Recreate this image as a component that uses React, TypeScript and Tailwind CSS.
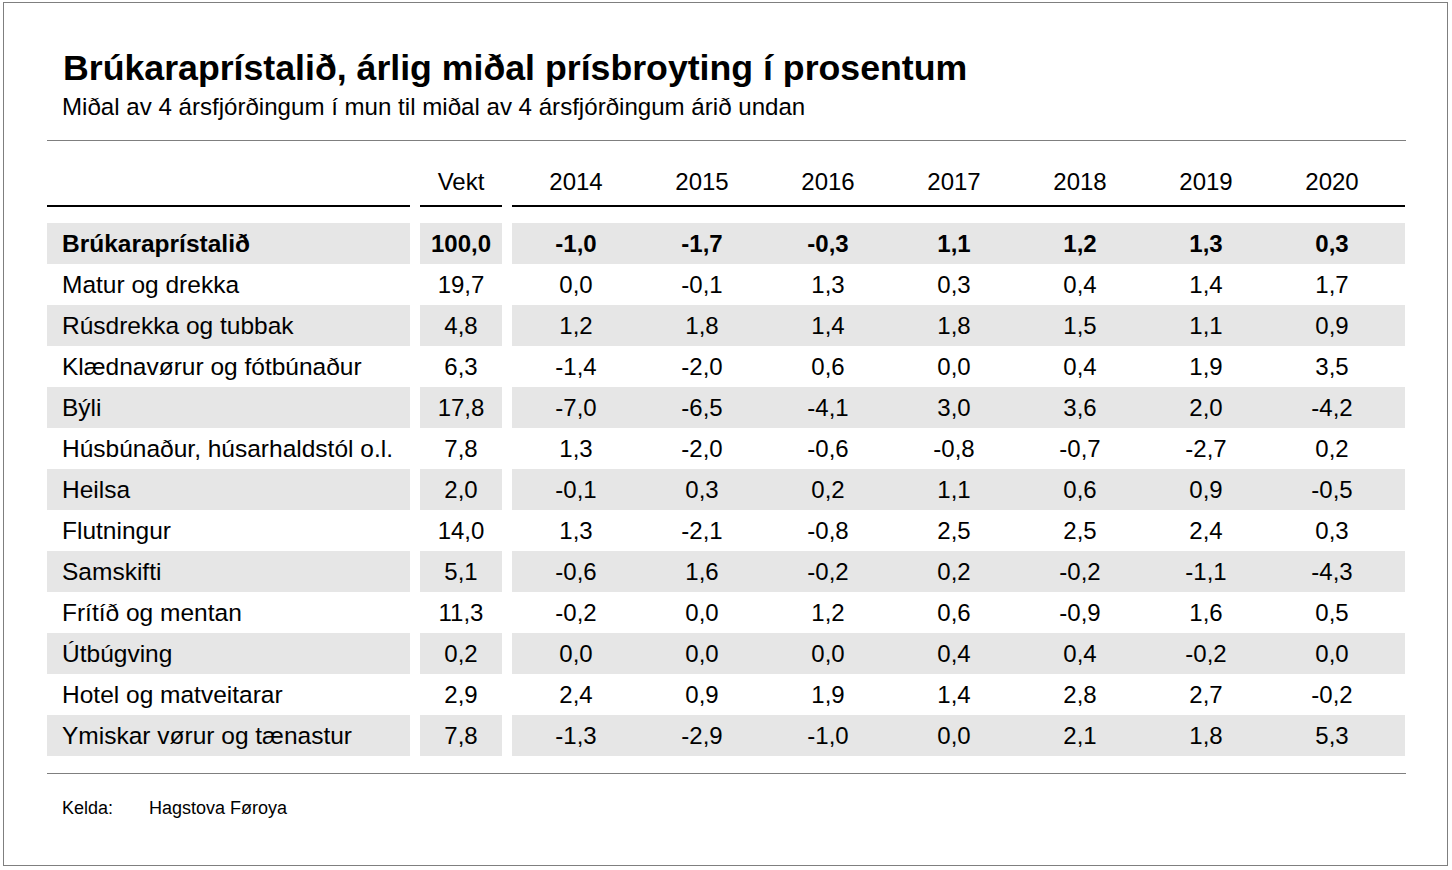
const rows: { label: string; vekt: string; values: string[]; bold?: boolean }[] = [
  { label: "Brúkaraprístalið", vekt: "100,0", values: ["-1,0", "-1,7", "-0,3", "1,1", "1,2", "1,3", "0,3"], bold: true },
  { label: "Matur og drekka", vekt: "19,7", values: ["0,0", "-0,1", "1,3", "0,3", "0,4", "1,4", "1,7"] },
  { label: "Rúsdrekka og tubbak", vekt: "4,8", values: ["1,2", "1,8", "1,4", "1,8", "1,5", "1,1", "0,9"] },
  { label: "Klædnavørur og fótbúnaður", vekt: "6,3", values: ["-1,4", "-2,0", "0,6", "0,0", "0,4", "1,9", "3,5"] },
  { label: "Býli", vekt: "17,8", values: ["-7,0", "-6,5", "-4,1", "3,0", "3,6", "2,0", "-4,2"] },
  { label: "Húsbúnaður, húsarhaldstól o.l.", vekt: "7,8", values: ["1,3", "-2,0", "-0,6", "-0,8", "-0,7", "-2,7", "0,2"] },
  { label: "Heilsa", vekt: "2,0", values: ["-0,1", "0,3", "0,2", "1,1", "0,6", "0,9", "-0,5"] },
  { label: "Flutningur", vekt: "14,0", values: ["1,3", "-2,1", "-0,8", "2,5", "2,5", "2,4", "0,3"] },
  { label: "Samskifti", vekt: "5,1", values: ["-0,6", "1,6", "-0,2", "0,2", "-0,2", "-1,1", "-4,3"] },
  { label: "Frítíð og mentan", vekt: "11,3", values: ["-0,2", "0,0", "1,2", "0,6", "-0,9", "1,6", "0,5"] },
  { label: "Útbúgving", vekt: "0,2", values: ["0,0", "0,0", "0,0", "0,4", "0,4", "-0,2", "0,0"] },
  { label: "Hotel og matveitarar", vekt: "2,9", values: ["2,4", "0,9", "1,9", "1,4", "2,8", "2,7", "-0,2"] },
  { label: "Ymiskar vørur og tænastur", vekt: "7,8", values: ["-1,3", "-2,9", "-1,0", "0,0", "2,1", "1,8", "5,3"] },
];

const years = ["2014", "2015", "2016", "2017", "2018", "2019", "2020"];

const App = () => {
  return (
    <div className="min-h-screen bg-white pl-[3px] pt-[2px] font-['Liberation_Sans',Arial,sans-serif] text-black">
      <div className="w-[1445px] h-[864px] border border-[#7f7f7f] pl-[43px] pr-[41px] pt-[45px]">
        {/* Title */}
        <div className="pl-[16px]">
          <h1 className="text-[35.7px] leading-[40px] font-bold">
            Brúkaraprístalið, árlig miðal prísbroyting í prosentum
          </h1>
          <p className="mt-[5px] text-[24.1px] leading-[28px] -ml-[1px]">
            Miðal av 4 ársfjórðingum í mun til miðal av 4 ársfjórðingum árið undan
          </p>
        </div>

        <div className="mt-[19px] h-px bg-[#7f7f7f]" />

        {/* Header */}
        <div className="grid grid-cols-[363px_82px_893px] gap-x-[10px] text-[24px] leading-[28px]">
          <div className="pt-[27px] pb-[9px] border-b-2 border-black" />
          <div className="pt-[27px] pb-[9px] border-b-2 border-black text-center">Vekt</div>
          <div className="pt-[27px] pb-[9px] border-b-2 border-black grid grid-cols-[repeat(7,126px)] pl-px">
            {years.map((y) => (
              <div key={y} className="text-center">{y}</div>
            ))}
          </div>
        </div>

        {/* Rows */}
        <div className="mt-[16px] text-[24px]">
          {rows.map((r, i) => {
            const bg = i % 2 === 0 ? "bg-[#e6e6e6]" : "bg-white";
            return (
              <div
                key={r.label}
                className={`grid grid-cols-[363px_82px_893px] gap-x-[10px] h-[41px] ${r.bold ? "font-bold" : ""}`}
              >
                <div className={`${bg} flex items-center pl-[15px] pt-px text-[24.5px]`}>{r.label}</div>
                <div className={`${bg} flex items-center justify-center pt-px`}>{r.vekt}</div>
                <div className={`${bg} grid grid-cols-[repeat(7,126px)] pl-px pr-[10px] pt-px`}>
                  {r.values.map((v, j) => (
                    <div key={j} className="flex items-center justify-center">{v}</div>
                  ))}
                </div>
              </div>
            );
          })}
        </div>

        <div className="mt-[17px] h-px bg-[#7f7f7f]" />

        {/* Source */}
        <div className="mt-[23px] flex text-[18px] leading-[22px] pl-[15px]">
          <span className="w-[87px]">Kelda:</span>
          <span>Hagstova Føroya</span>
        </div>
      </div>
    </div>
  );
};

export default App;
